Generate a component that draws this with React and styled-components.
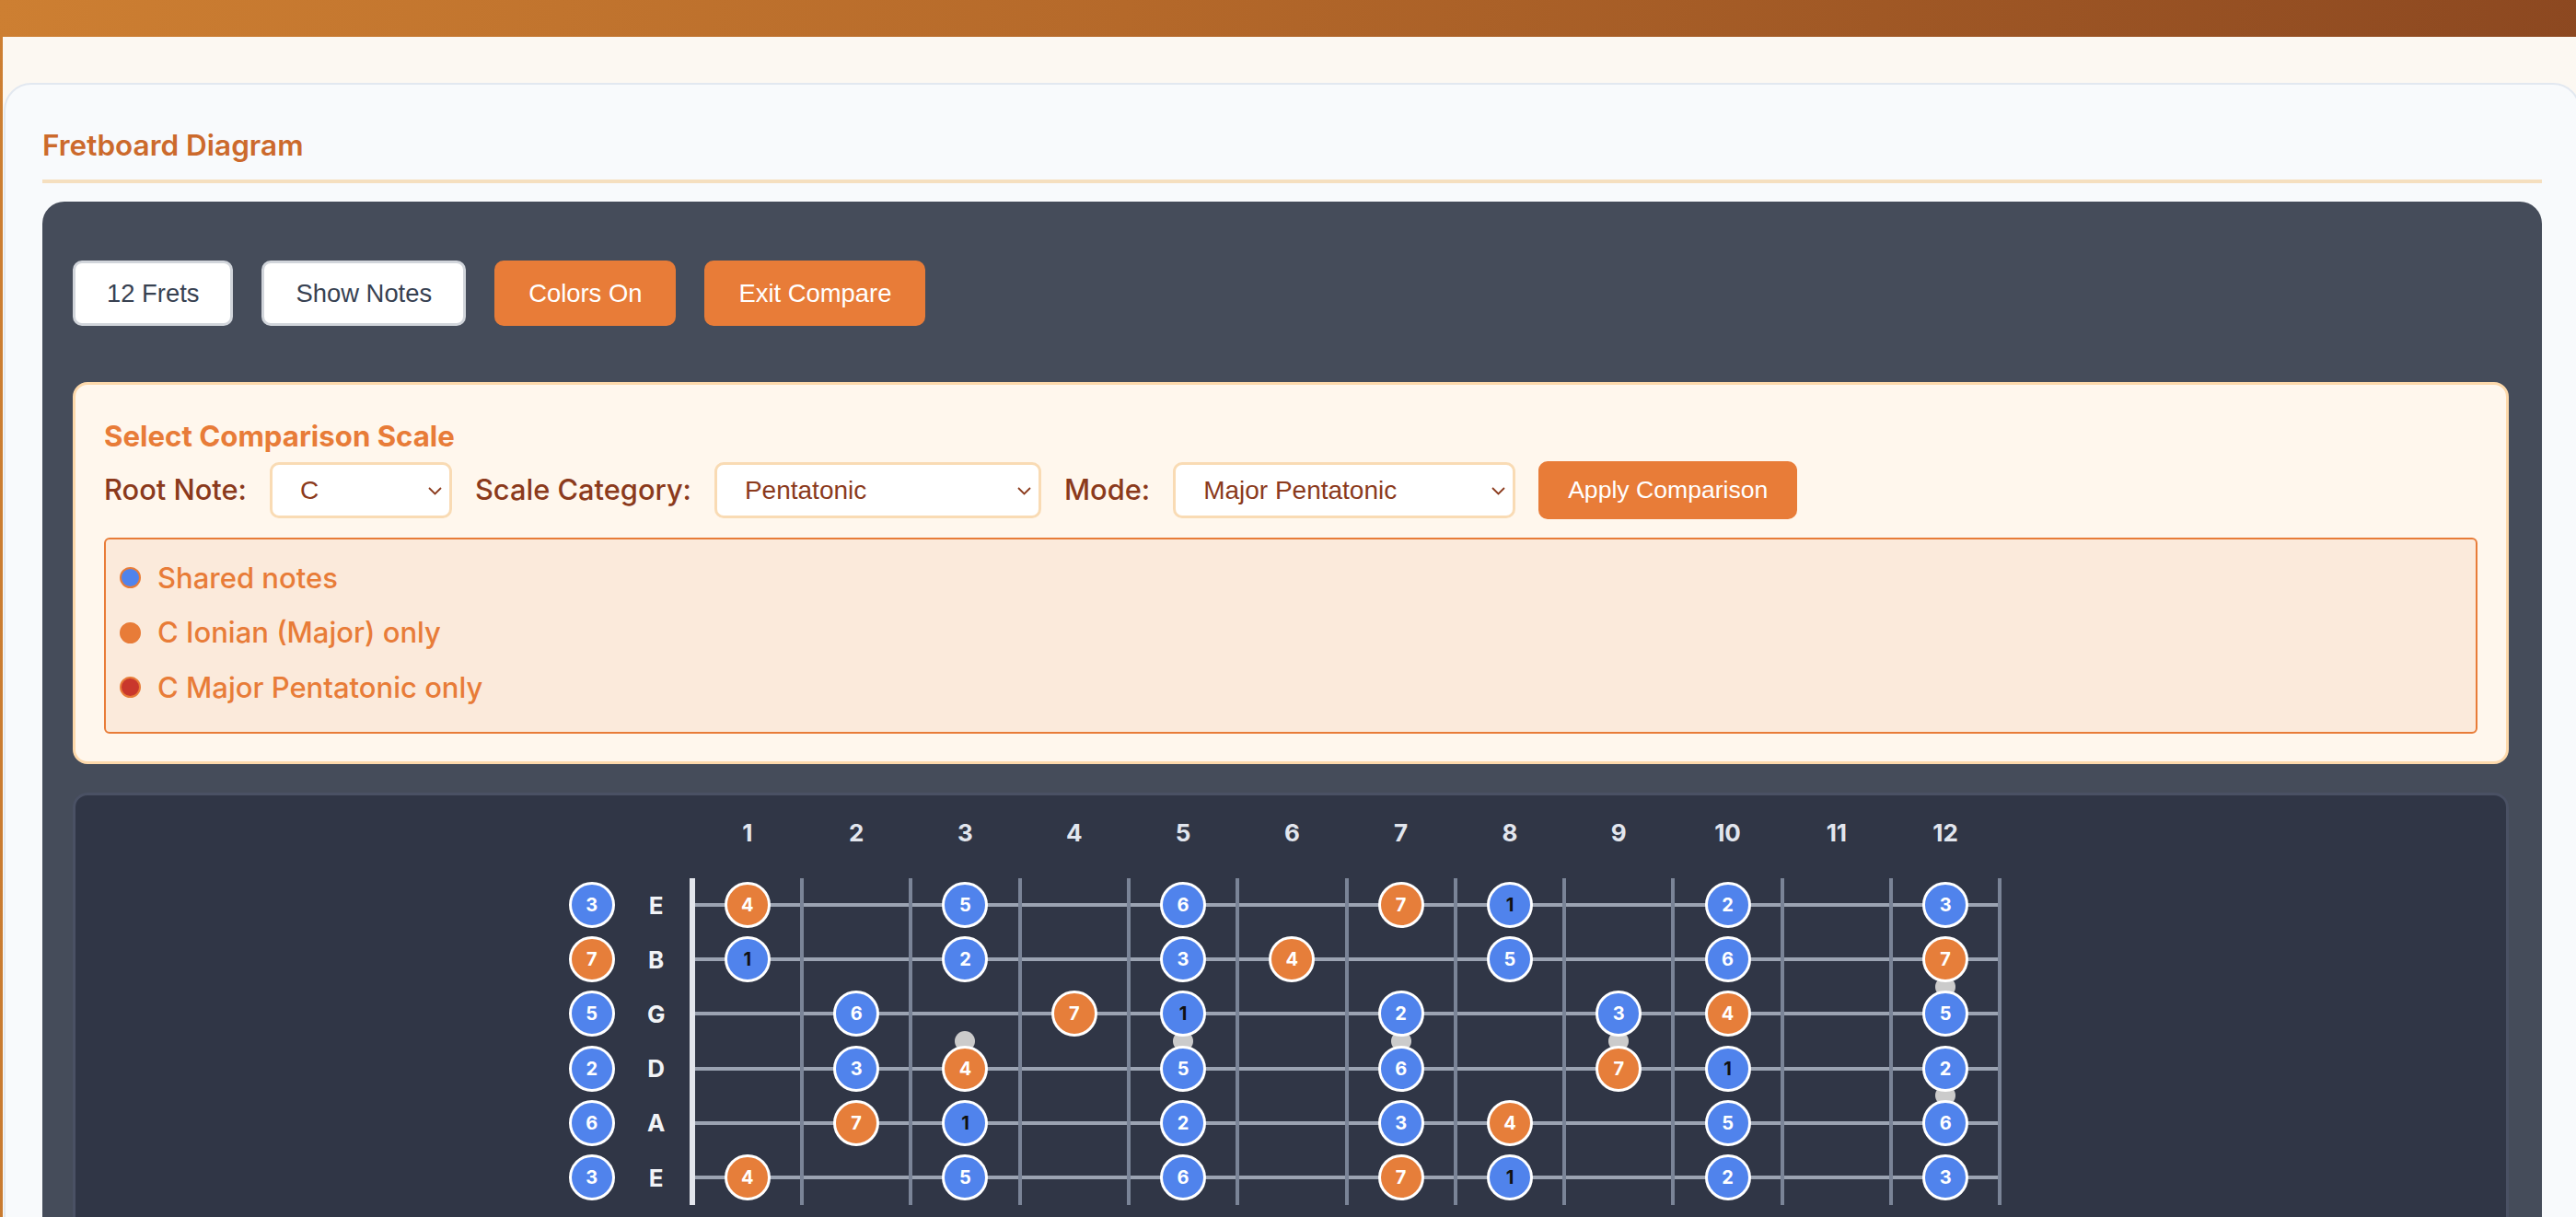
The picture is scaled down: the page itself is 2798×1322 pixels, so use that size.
import React from "react";
import styled, { createGlobalStyle, css } from "styled-components";

const GlobalStyle = createGlobalStyle`
  html, body { margin: 0; padding: 0; overflow: hidden; }
  body { font-family: Inter, "Noto Sans", sans-serif; }
  * { box-sizing: border-box; }
`;

const ORANGE = "#e87c38";
const BROWN = "#8b3a1c";
const BLUE = "#5083ec";
const NOTE_ORANGE = "#e67e3a";

const Page = styled.div`
  min-height: 100vh;
  padding: 40px 0 0 3px;
  background: linear-gradient(100deg, #cd7f32 0%, #b5692a 40%, #86431f 100%);
`;

const Main = styled.main`
  background: #fcf8f2;
  padding-top: 50px;
  min-height: 1400px;
`;

const Card = styled.section`
  margin: 0 -5px 0 1px;
  background: #f8fafc;
  border: 2px solid #e2e8f0;
  border-radius: 30px;
  padding: 49px 40px 40px;
`;

const SectionTitle = styled.h2`
  margin: 0 0 20px;
  padding-bottom: 20px;
  border-bottom: 4px solid #f5dfbf;
  font-family: Inter, sans-serif;
  font-size: 31.5px;
  line-height: 34px;
  font-weight: 600;
  color: #cc6a2c;
`;

const DarkPanel = styled.div`
  background: #454c5a;
  border-radius: 24px;
  padding: 64px 36px 40px 33px;
`;

const Toolbar = styled.div`
  display: flex;
  gap: 31px;
`;

const ToolButton = styled.button`
  height: 71px;
  padding: 0 34px;
  border-radius: 10px;
  border: 3px solid ${(p) => (p.$active ? ORANGE : "#d1d5db")};
  background: ${(p) => (p.$active ? ORANGE : "#ffffff")};
  color: ${(p) => (p.$active ? "#ffffff" : "#374151")};
  font-family: "Liberation Sans", Arial, sans-serif;
  font-size: 27.4px;
  cursor: pointer;
`;

const CompareBox = styled.div`
  margin-top: 61px;
  background: #fff7ed;
  border: 3px solid #fdd9ab;
  border-radius: 16px;
  padding: 39px 31px 30px;
`;

const CompareTitle = styled.h3`
  margin: 0 0 9.5px;
  font-family: Inter, sans-serif;
  font-size: 31.2px;
  line-height: 34px;
  font-weight: 700;
  color: ${ORANGE};
`;

const ControlRow = styled.div`
  display: flex;
  align-items: center;
  gap: 25px;
  height: 63px;
`;

const FieldLabel = styled.label`
  font-family: Inter, sans-serif;
  font-size: 30.8px;
  line-height: 34px;
  font-weight: 500;
  color: ${BROWN};
  white-space: nowrap;
`;

const SelectWrap = styled.div`
  position: relative;
  width: ${(p) => p.$w}px;
  height: 61px;
`;

const Select = styled.select`
  appearance: none;
  width: 100%;
  height: 100%;
  padding: 0 40px 0 30px;
  border: 3px solid #f9dbb4;
  border-radius: 10px;
  background: #ffffff;
  color: ${BROWN};
  font-family: "Liberation Sans", Arial, sans-serif;
  font-size: 28px;
`;

const Chevron = styled.svg`
  position: absolute;
  right: 11px;
  top: 27px;
  pointer-events: none;
`;

const ApplyButton = styled.button`
  height: 63px;
  padding: 0 32px;
  border: 0;
  border-radius: 10px;
  background: ${ORANGE};
  color: #ffffff;
  font-family: "Liberation Sans", Arial, sans-serif;
  font-size: 26.6px;
`;

const Legend = styled.div`
  margin-top: 20px;
  background: #fbeadb;
  border: 2px solid ${ORANGE};
  border-radius: 6px;
  padding: 25px 15px 31px;
  display: flex;
  flex-direction: column;
  gap: 25.5px;
`;

const LegendItem = styled.div`
  display: flex;
  align-items: center;
  gap: 18px;
  height: 34px;
  font-family: Inter, sans-serif;
  font-size: 31px;
  line-height: 34px;
  font-weight: 500;
  color: ${ORANGE};
`;

const LegendDot = styled.span`
  width: 23px;
  height: 23px;
  border-radius: 50%;
  border: 2px solid ${ORANGE};
  background: ${(p) => p.$color};
`;

const BoardPanel = styled.div`
  margin-top: 31px;
  background: #303646;
  border: 3px solid #4a5164;
  border-radius: 16px;
  padding: 24px 12px 60px 0;
  display: flex;
  justify-content: center;
`;

const Board = styled.div`
  display: flex;
  flex-direction: column;
`;

const NumberRow = styled.div`
  display: flex;
  height: 34px;
  margin-bottom: 32px;
  padding-left: 137px;
`;

const FretNumber = styled.div`
  width: 118.31px;
  padding-right: 4px;
  text-align: center;
  font-family: Inter, sans-serif;
  font-size: 26px;
  line-height: 34px;
  font-weight: 700;
  color: #e2e6ee;
`;

const StringRow = styled.div`
  display: flex;
  height: 59.2px;
`;

const OpenSlot = styled.div`
  width: 69px;
  display: flex;
  align-items: center;
`;

const StringLabel = styled.div`
  width: 62px;
  padding-right: 10px;
  display: flex;
  align-items: center;
  justify-content: center;
  font-family: Inter, sans-serif;
  font-size: 26px;
  font-weight: 700;
  color: #f1f3f6;
`;

const Nut = styled.div`
  width: 6px;
  background: #e2e5ec;
`;

const FretCell = styled.div`
  position: relative;
  width: 118.31px;
  border-right: 4px solid #7a8497;
  display: flex;
  align-items: center;
  justify-content: center;
  &::before {
    content: "";
    position: absolute;
    left: 0;
    right: 0;
    top: 50%;
    height: 4px;
    margin-top: -2px;
    background: #9ba3b2;
  }
`;

const Marker = styled.span`
  position: absolute;
  left: 50%;
  bottom: -11px;
  width: 22px;
  height: 22px;
  margin-left: -11px;
  border-radius: 50%;
  background: #cbcbcb;
  z-index: 1;
`;

const NoteCircle = styled.div`
  position: relative;
  z-index: 2;
  width: 50px;
  height: 50px;
  border-radius: 50%;
  border: 3px solid #ffffff;
  background: ${(p) => (p.$kind === "o" ? NOTE_ORANGE : BLUE)};
  display: flex;
  align-items: center;
  justify-content: center;
  font-family: Inter, sans-serif;
  font-size: 20px;
  font-weight: 700;
  color: #ffffff;
  ${(p) =>
    p.$root &&
    css`
      color: #111111;
    `}
`;

const STRINGS = [
  { name: "E", open: ["3", "b"], notes: { 1: ["4", "o"], 3: ["5", "b"], 5: ["6", "b"], 7: ["7", "o"], 8: ["1", "b"], 10: ["2", "b"], 12: ["3", "b"] } },
  { name: "B", open: ["7", "o"], notes: { 1: ["1", "b"], 3: ["2", "b"], 5: ["3", "b"], 6: ["4", "o"], 8: ["5", "b"], 10: ["6", "b"], 12: ["7", "o"] } },
  { name: "G", open: ["5", "b"], notes: { 2: ["6", "b"], 4: ["7", "o"], 5: ["1", "b"], 7: ["2", "b"], 9: ["3", "b"], 10: ["4", "o"], 12: ["5", "b"] } },
  { name: "D", open: ["2", "b"], notes: { 2: ["3", "b"], 3: ["4", "o"], 5: ["5", "b"], 7: ["6", "b"], 9: ["7", "o"], 10: ["1", "b"], 12: ["2", "b"] } },
  { name: "A", open: ["6", "b"], notes: { 2: ["7", "o"], 3: ["1", "b"], 5: ["2", "b"], 7: ["3", "b"], 8: ["4", "o"], 10: ["5", "b"], 12: ["6", "b"] } },
  { name: "E", open: ["3", "b"], notes: { 1: ["4", "o"], 3: ["5", "b"], 5: ["6", "b"], 7: ["7", "o"], 8: ["1", "b"], 10: ["2", "b"], 12: ["3", "b"] } },
];

const FRETS = Array.from({ length: 12 }, (_, i) => i + 1);

const hasMarker = (row, fret) => {
  if (row === 2 && [3, 5, 7, 9].includes(fret)) return true;
  if ((row === 1 || row === 3) && fret === 12) return true;
  return false;
};

const Note = ({ value }) => (
  <NoteCircle $kind={value[1]} $root={value[0] === "1"}>
    {value[0]}
  </NoteCircle>
);

const ChevronIcon = () => (
  <Chevron width="15" height="9" viewBox="0 0 15 9">
    <polyline points="1,1 7.5,7.5 14,1" fill="none" stroke={BROWN} strokeWidth="1.8" />
  </Chevron>
);

const SelectField = ({ width, value, options }) => (
  <SelectWrap $w={width}>
    <Select defaultValue={value}>
      {options.map((o) => (
        <option key={o}>{o}</option>
      ))}
    </Select>
    <ChevronIcon />
  </SelectWrap>
);

export default function App() {
  return (
    <>
      <GlobalStyle />
      <Page>
        <Main>
          <Card>
            <SectionTitle>Fretboard Diagram</SectionTitle>
            <DarkPanel>
              <Toolbar>
                <ToolButton>12 Frets</ToolButton>
                <ToolButton>Show Notes</ToolButton>
                <ToolButton $active>Colors On</ToolButton>
                <ToolButton $active>Exit Compare</ToolButton>
              </Toolbar>

              <CompareBox>
                <CompareTitle>Select Comparison Scale</CompareTitle>
                <ControlRow>
                  <FieldLabel>Root Note:</FieldLabel>
                  <SelectField width={198} value="C" options={["C", "C#", "D", "D#", "E", "F", "F#", "G", "G#", "A", "A#", "B"]} />
                  <FieldLabel>Scale Category:</FieldLabel>
                  <SelectField width={355} value="Pentatonic" options={["Diatonic", "Pentatonic", "Blues"]} />
                  <FieldLabel>Mode:</FieldLabel>
                  <SelectField width={372} value="Major Pentatonic" options={["Major Pentatonic", "Minor Pentatonic"]} />
                  <ApplyButton>Apply Comparison</ApplyButton>
                </ControlRow>
                <Legend>
                  <LegendItem>
                    <LegendDot $color={BLUE} />
                    Shared notes
                  </LegendItem>
                  <LegendItem>
                    <LegendDot $color={ORANGE} />
                    C Ionian (Major) only
                  </LegendItem>
                  <LegendItem>
                    <LegendDot $color="#c9372c" />
                    C Major Pentatonic only
                  </LegendItem>
                </Legend>
              </CompareBox>

              <BoardPanel>
                <Board>
                  <NumberRow>
                    {FRETS.map((f) => (
                      <FretNumber key={f}>{f}</FretNumber>
                    ))}
                  </NumberRow>
                  {STRINGS.map((s, row) => (
                    <StringRow key={row}>
                      <OpenSlot>
                        <Note value={s.open} />
                      </OpenSlot>
                      <StringLabel>{s.name}</StringLabel>
                      <Nut />
                      {FRETS.map((f) => (
                        <FretCell key={f}>
                          {hasMarker(row, f) && <Marker />}
                          {s.notes[f] && <Note value={s.notes[f]} />}
                        </FretCell>
                      ))}
                    </StringRow>
                  ))}
                </Board>
              </BoardPanel>
            </DarkPanel>
          </Card>
        </Main>
      </Page>
    </>
  );
}
